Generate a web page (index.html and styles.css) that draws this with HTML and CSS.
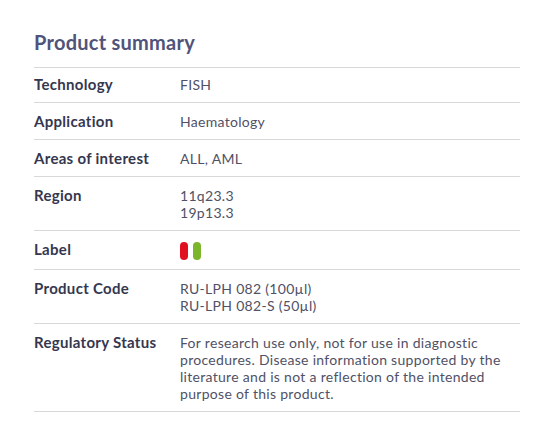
FILE: index.html
```html
<!DOCTYPE html>
<html>
<head>
<meta charset="utf-8">
<link rel="stylesheet" href="styles.css">
</head>
<body>
<section class="summary">
  <h2 class="title">Product summary</h2>
  <div class="table">
    <div class="row first"><div class="key">Technology</div><div class="val">FISH</div></div>
    <div class="row"><div class="key">Application</div><div class="val">Haematology</div></div>
    <div class="row"><div class="key">Areas of interest</div><div class="val">ALL, AML</div></div>
    <div class="row"><div class="key">Region</div><div class="val">11q23.3<br>19p13.3</div></div>
    <div class="row label-row"><div class="key">Label</div><div class="val pills"><span class="pill red"></span><span class="pill green"></span></div></div>
    <div class="row"><div class="key">Product Code</div><div class="val">RU-LPH 082 (100µl)<br>RU-LPH 082-S (50µl)</div></div>
    <div class="row"><div class="key">Regulatory Status</div><div class="val">For research use only, not for use in diagnostic procedures. Disease information supported by the literature and is not a reflection of the intended purpose of this product.</div></div>
  </div>
</section>
</body>
</html>
```

FILE: styles.css
```css
html, body {
  margin: 0;
  padding: 0;
  background: #ffffff;
}
body {
  font-family: "Lato", "Open Sans", sans-serif;
}
.summary {
  padding: 30px 15px 0 34px;
}
.title {
  margin: 0 0 13px 0;
  font-size: 20px;
  line-height: 24px;
  font-weight: 700;
  letter-spacing: 0.25px;
  color: #50537a;
}
.table {
  border-top: 1px solid #d8d8d8;
}
.row {
  display: grid;
  grid-template-columns: 146px 1fr;
  padding: 10px 0 9px 0;
  border-bottom: 1px solid #d8d8d8;
  font-size: 14px;
  line-height: 17px;
}
.row.first {
  padding-top: 8px;
}
.key {
  font-weight: 700;
  font-size: 15px;
  letter-spacing: 0.3px;
  color: #35374f;
}
.val {
  color: #505166;
  letter-spacing: 0.3px;
  padding-right: 4px;
}
.pills {
  display: flex;
  gap: 5px;
  align-items: center;
  padding-top: 1px;
}
.label-row {
  padding-top: 10px;
  padding-bottom: 9px;
}
.pill {
  display: block;
  width: 8px;
  height: 18px;
  border-radius: 4px;
}
.red { background: #e0101e; }
.green { background: #7ab52a; }
```
